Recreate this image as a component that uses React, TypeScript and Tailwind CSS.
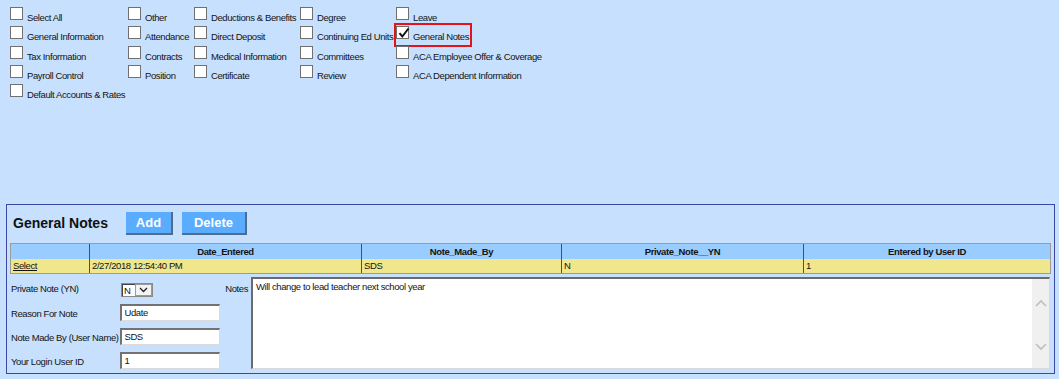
import React from 'react'

type Item = { label: string; checked?: boolean; highlight?: boolean }

const col1: Item[] = [
  { label: 'Select All' },
  { label: 'General Information' },
  { label: 'Tax Information' },
  { label: 'Payroll Control' },
  { label: 'Default Accounts & Rates' },
]
const col2: Item[] = [{ label: 'Other' }, { label: 'Attendance' }, { label: 'Contracts' }, { label: 'Position' }]
const col3: Item[] = [
  { label: 'Deductions & Benefits' },
  { label: 'Direct Deposit' },
  { label: 'Medical Information' },
  { label: 'Certificate' },
]
const col4: Item[] = [{ label: 'Degree' }, { label: 'Continuing Ed Units' }, { label: 'Committees' }, { label: 'Review' }]
const col5: Item[] = [
  { label: 'Leave' },
  { label: 'General Notes', checked: true, highlight: true },
  { label: 'ACA Employee Offer & Coverage' },
  { label: 'ACA Dependent Information' },
]

function CheckItem({ item }: { item: Item }) {
  return (
    <div className="relative h-[19.33px] flex items-start">
      <span className="relative w-[13px] h-[13px] shrink-0 bg-white border border-[#707070]">
        {item.checked && (
          <svg className="absolute left-[1px] top-[0px]" width="12" height="12" viewBox="0 0 12 12">
            <path d="M1.5 6.2 L4.3 9.5 L10.5 1.5" fill="none" stroke="#111" strokeWidth="2" />
          </svg>
        )}
      </span>
      <span className="ml-[4px] mt-[4px] leading-[13px] whitespace-nowrap">{item.label}</span>
      {item.highlight && (
        <span className="absolute left-[-2px] top-[-3px] w-[78px] h-[24px] border-2 border-[#e3131b]" />
      )}
    </div>
  )
}

function Column({ items, className }: { items: Item[]; className: string }) {
  return (
    <div className={className}>
      {items.map((it) => (
        <CheckItem key={it.label} item={it} />
      ))}
    </div>
  )
}

function Chevron({ up }: { up?: boolean }) {
  return (
    <svg width="12" height="8" viewBox="0 0 12 8">
      <path d={up ? 'M1 7 L6 2 L11 7' : 'M1 1 L6 6 L11 1'} fill="none" stroke="#bfbfbf" strokeWidth="1.6" />
    </svg>
  )
}

function TextBox({ value }: { value: string }) {
  return (
    <div className="w-[100px] h-[17px] bg-white border-t-2 border-l-2 border-t-[#727272] border-l-[#727272] border-b border-r border-b-[#dadada] border-r-[#dadada] pl-[2px] leading-[14px]">
      {value}
    </div>
  )
}

export default function App() {
  return (
    <div className="w-[1059px] h-[379px] overflow-hidden bg-[#c6e0fd] font-['Liberation_Sans',Arial,sans-serif] text-[9.5px] tracking-[-0.4px] text-[#141414]">
      <div className="h-[204px] pt-[7px] pl-[10px] flex">
        <Column items={col1} className="w-[118px]" />
        <Column items={col2} className="w-[66px]" />
        <Column items={col3} className="w-[106px]" />
        <Column items={col4} className="w-[96px]" />
        <Column items={col5} className="w-[200px]" />
      </div>

      <div className="ml-[6px] w-[1049px] h-[170px] border border-[#3d47a5]">
        <div className="pt-[7px] flex items-center">
          <div className="ml-[6px] w-[113px] text-[14px] font-bold tracking-normal leading-[23px] text-[#111]">
            General Notes
          </div>
          <button className="w-[47px] h-[23px] bg-[#5aacff] border-r-2 border-b-2 border-[#4e6d8c] text-white text-[13px] font-bold tracking-normal leading-[21px]">
            Add
          </button>
          <button className="ml-[9px] w-[65px] h-[23px] bg-[#5aacff] border-r-2 border-b-2 border-[#4e6d8c] text-white text-[13px] font-bold tracking-normal leading-[21px]">
            Delete
          </button>
        </div>

        <div className="mt-[8px] ml-[3px] w-[1041px] border border-[#9b9b9b]">
          <div className="grid grid-cols-[78px_272px_200px_242px_1fr] h-[15px] bg-[#99ccff] font-bold leading-[15px] text-center">
            <div />
            <div className="border-l border-[#505050]">Date_Entered</div>
            <div className="border-l border-[#505050]">Note_Made_By</div>
            <div className="border-l border-[#505050]">Private_Note__YN</div>
            <div className="border-l border-[#505050]">Entered by User ID</div>
          </div>
          <div className="grid grid-cols-[78px_272px_200px_242px_1fr] h-[14px] bg-[#f0e68c] leading-[14px]">
            <div className="pl-[2px] underline">Select</div>
            <div className="pl-[2px] border-l border-[#505050]">2/27/2018 12:54:40 PM</div>
            <div className="pl-[2px] border-l border-[#505050]">SDS</div>
            <div className="pl-[2px] border-l border-[#505050]">N</div>
            <div className="pl-[2px] border-l border-[#505050]">1</div>
          </div>
        </div>

        <div className="mt-[3px] flex">
          <div className="ml-[4px] pt-[3px] w-[209px]">
            <div className="h-[24px] flex items-start">
              <div className="w-[110px] leading-[17px]">Private Note (YN)</div>
              <div className="mt-[3px] w-[32px] h-[14px] flex border border-[#8a8a8a] bg-[#e9e9e9]">
                <div className="w-[13px] bg-white border-t border-l border-[#444] pl-[1px] leading-[12px]">N</div>
                <div className="flex-1 flex items-center justify-center border border-[#9a9a9a] bg-[#f3f3f3]">
                  <svg width="9" height="6" viewBox="0 0 9 6">
                    <path d="M1 1 L4.5 4.5 L8 1" fill="none" stroke="#222" strokeWidth="1.3" />
                  </svg>
                </div>
              </div>
            </div>
            <div className="h-[24px] flex items-start">
              <div className="w-[110px] pt-[1px] leading-[17px]">Reason For Note</div>
              <TextBox value="Udate" />
            </div>
            <div className="h-[24px] flex items-start">
              <div className="w-[110px] pt-[1px] leading-[17px] whitespace-nowrap">Note Made By (User Name)</div>
              <TextBox value="SDS" />
            </div>
            <div className="h-[24px] flex items-start">
              <div className="w-[110px] pt-[1px] leading-[17px]">Your Login User ID</div>
              <TextBox value="1" />
            </div>
          </div>

          <div className="w-[28px] mt-[3px] text-right leading-[17px]">Notes</div>

          <div className="ml-[3px] w-[799px] h-[92px] flex bg-white border-t-2 border-l-2 border-t-[#6b6b6b] border-l-[#6b6b6b] border-r border-b border-r-[#d9d9d9] border-b-[#d9d9d9]">
            <div className="flex-1 pl-[3px] pt-[1px] leading-[13px]">Will change to lead teacher next school year</div>
            <div className="w-[17px] bg-[#f0f0f0] flex flex-col items-center">
              <div className="mt-[20px]">
                <Chevron up />
              </div>
              <div className="mt-[36px]">
                <Chevron />
              </div>
            </div>
          </div>
        </div>
      </div>
    </div>
  )
}
